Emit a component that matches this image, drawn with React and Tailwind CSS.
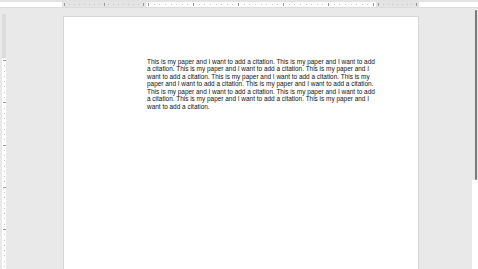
import React from "react";

const para =
  "This is my paper and I want to add a citation. This is my paper and I want to add a citation. This is my paper and I want to add a citation. This is my paper and I want to add a citation. This is my paper and I want to add a citation. This is my paper and I want to add a citation. This is my paper and I want to add a citation. This is my paper and I want to add a citation. This is my paper and I want to add a citation. This is my paper and I want to add a citation. This is my paper and I want to add a citation.";

const Ticks = ({ count, vertical }) => (
  <div className={vertical ? "flex flex-col justify-between h-full items-center py-[2px]" : "flex justify-between w-full items-center px-[2px]"}>
    {Array.from({ length: count }).map((_, i) => (
      <span
        key={i}
        className={
          vertical
            ? i % 8 === 0
              ? "block w-[3px] h-px bg-[#9a9a9a]"
              : "block w-px h-px bg-[#c4c4c4]"
            : i % 8 === 0
            ? "block h-[3px] w-px bg-[#9a9a9a]"
            : "block h-px w-px bg-[#c4c4c4]"
        }
      />
    ))}
  </div>
);

export default function App() {
  return (
    <div className="w-[478px] h-[269px] overflow-hidden flex flex-col bg-[#e9e9e9] font-['Liberation_Sans',Arial,sans-serif]">
      <div className="h-[2px] bg-[#e2e2e2]" />
      {/* top ruler */}
      <div className="h-[6px] flex bg-white border-b border-[#dcdcdc]">
        <div className="w-[62px] bg-white" />
        <div className="w-[84px] bg-[#e4e4e4] flex">
          <Ticks count={17} />
        </div>
        <div className="w-[230px] bg-white flex">
          <Ticks count={41} />
        </div>
        <div className="w-[43px] bg-[#e4e4e4] flex">
          <Ticks count={9} />
        </div>
        <div className="flex-1 bg-white" />
      </div>
      <div className="flex flex-1 min-h-0">
        {/* left ruler */}
        <div className="w-[6px] flex flex-col bg-[#e9e9e9] pl-[2px]">
          <div className="h-[6px]" />
          <div className="h-[44px] bg-[#dcdcdc]" />
          <div className="flex-1 bg-white">
            <Ticks count={40} vertical />
          </div>
        </div>
        {/* canvas */}
        <div className="flex-1 pt-[8px] pl-[57px]">
          <div className="w-[356px] h-[400px] bg-white border-l border-t border-r border-[#d6d6d6] pl-[83px] pt-[41px]">
            <p className="w-[230px] text-[6.45px] leading-[7.45px] text-[#111]">{para}</p>
          </div>
        </div>
        {/* scrollbar */}
        <div className="w-[6px] flex flex-col bg-[#e9e9e9]">
          <div className="h-[2px]" />
          <div className="ml-[3px] w-[2px] h-[170px] bg-[#7a7a7a] rounded-full" />
          <div className="flex-1 bg-white" />
        </div>
      </div>
    </div>
  );
}
